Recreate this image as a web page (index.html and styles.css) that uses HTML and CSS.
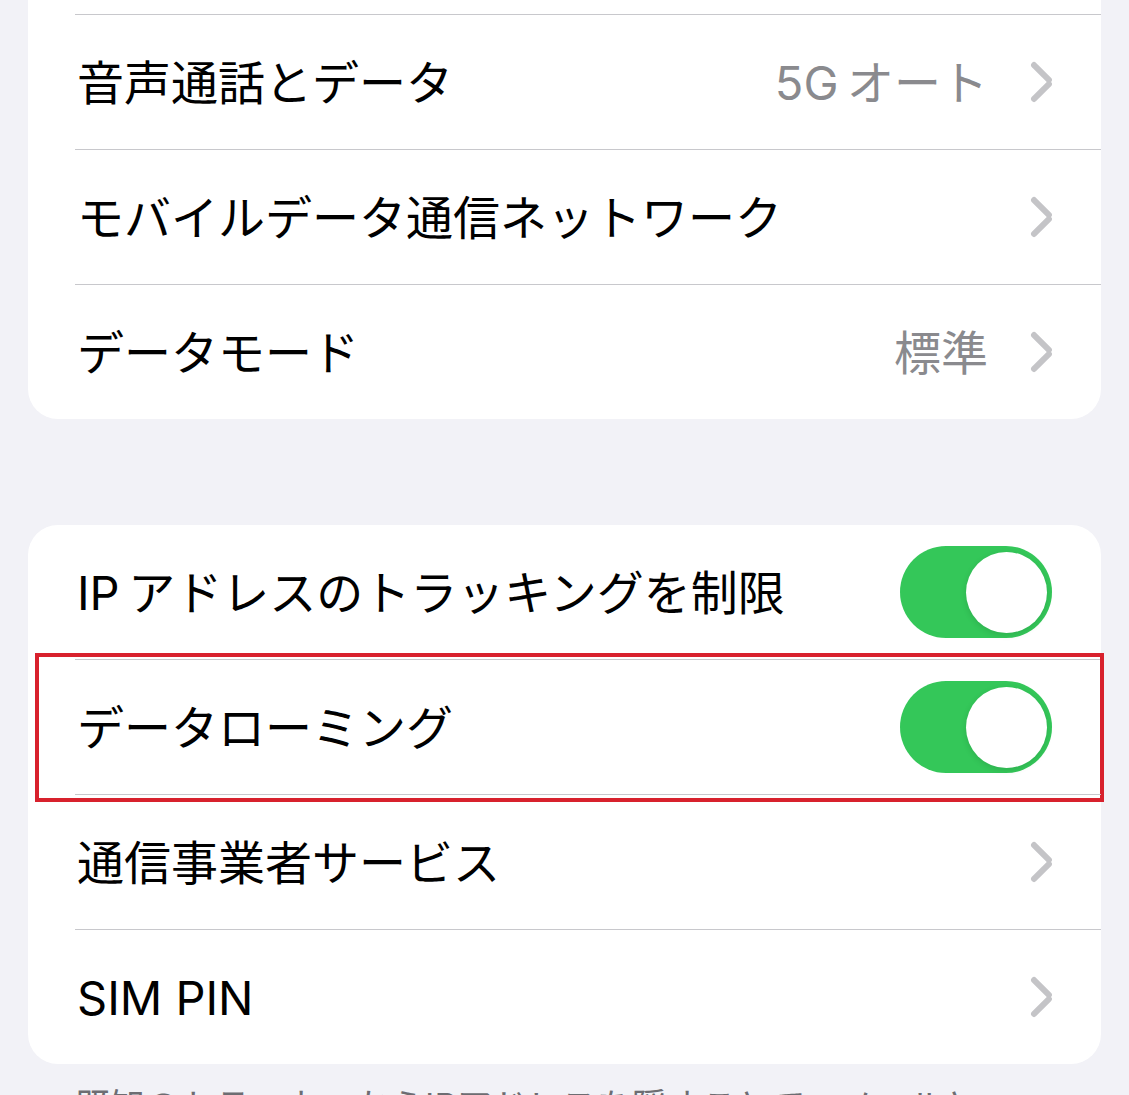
FILE: index.html
```html
<!DOCTYPE html>
<html lang="ja">
<head>
<meta charset="utf-8">
<title>モバイル通信</title>
<link rel="stylesheet" href="styles.css">
</head>
<body>
<div class="page">
  <section class="card">
    <div class="row row-hidden"><span class="right"><span class="chev"></span></span></div>
    <div class="row"><span class="label">音声通話とデータ</span><span class="right"><span class="value">5G&#8201;オート</span><span class="chev"></span></span></div>
    <div class="row"><span class="label">モバイルデータ通信ネットワーク</span><span class="right"><span class="chev"></span></span></div>
    <div class="row"><span class="label">データモード</span><span class="right"><span class="value">標準</span><span class="chev"></span></span></div>
  </section>

  <section class="card">
    <div class="row"><span class="label">IP&#8201;アドレスのトラッキングを制限</span><span class="toggle"><span class="knob"></span></span></div>
    <div class="row highlighted"><span class="label">データローミング</span><span class="toggle"><span class="knob"></span></span><span class="mark"></span></div>
    <div class="row"><span class="label">通信事業者サービス</span><span class="right"><span class="chev"></span></span></div>
    <div class="row"><span class="label">SIM PIN</span><span class="right"><span class="chev"></span></span></div>
  </section>
  <p class="footer">既知のトラッカーからIPアドレスを隠すことで、メールとSafariでのIPアドレスのトラッキングを制限します。</p>
</div>
</body>
</html>
```

FILE: styles.css
```css
html, body {
  margin: 0;
  padding: 0;
  background: #f2f2f7;
  overflow: hidden;
}
body {
  font-family: Inter, "Noto Sans CJK JP", sans-serif;
  color: #000;
}
.page {
  padding: 0 28px;
  margin-top: -120px;
  display: flex;
  flex-direction: column;
  gap: 106px;
}
.card {
  background: #fff;
  border-radius: 30px;
  display: flex;
  flex-direction: column;
}
.row {
  position: relative;
  height: 134px;
  margin-left: 47px;
  padding-right: 49px;
  display: flex;
  align-items: center;
  justify-content: space-between;
  border-top: 1px solid #c8c8cc;
  box-sizing: content-box;
}
.row:first-child {
  border-top: none;
}
.row-hidden {
  justify-content: flex-end;
}
.label {
  font-size: 47px;
  line-height: 1;
  padding-left: 2px;
  white-space: nowrap;
}
.right {
  display: flex;
  align-items: center;
  gap: 42px;
}
.value {
  font-size: 47px;
  line-height: 1;
  color: #8a8a8e;
  white-space: nowrap;
}
.chev {
  width: 22px;
  height: 38px;
  position: relative;
  display: inline-block;
}
.chev::before, .chev::after {
  content: "";
  position: absolute;
  left: -6px;
  top: 16px;
  width: 27px;
  height: 6px;
  border-radius: 3px;
  background: #c4c4c7;
  transform-origin: right center;
}
.chev::before {
  transform: rotate(45deg);
}
.chev::after {
  transform: rotate(-45deg);
}
.toggle {
  width: 152px;
  height: 92px;
  border-radius: 46px;
  background: #34c759;
  display: flex;
  align-items: center;
  justify-content: flex-end;
  padding: 0 5px;
  box-sizing: border-box;
}
.knob {
  width: 81px;
  height: 81px;
  border-radius: 50%;
  background: #fff;
  box-shadow: 0 2px 6px rgba(0,0,0,0.12);
}
.mark {
  position: absolute;
  left: -40px;
  right: -3px;
  top: -7px;
  bottom: -8px;
  border: 4px solid #d8212d;
  pointer-events: none;
}
.footer {
  margin: -86px 47px 0 47px;
  font-size: 35px;
  line-height: 1.3;
  color: #6d6d72;
}
```
